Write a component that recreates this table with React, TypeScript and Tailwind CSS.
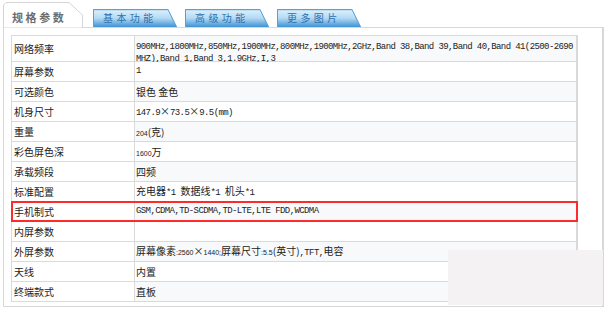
import React from "react";

const M = ({ children }: { children: React.ReactNode }) => (
  <span className="font-['Liberation_Mono',monospace] text-[9px] tracking-[-0.6px]">{children}</span>
);
const S = ({ children }: { children: React.ReactNode }) => (
  <span className="font-['Liberation_Sans',sans-serif] text-[7px]">{children}</span>
);

type Row = { label: string; value: React.ReactNode; highlight?: boolean };

const rows: Row[] = [
  { label: "屏幕参数", value: <M>1</M> },
  { label: "可选颜色", value: <span>银色 金色</span> },
  {
    label: "机身尺寸",
    value: (
      <span>
        <M>147.9</M>×<M>73.5</M>×<M>9.5(mm)</M>
      </span>
    ),
  },
  {
    label: "重量",
    value: (
      <span>
        <S>204</S>(克)
      </span>
    ),
  },
  {
    label: "彩色屏色深",
    value: (
      <span>
        <S>1600</S>万
      </span>
    ),
  },
  { label: "承载频段", value: <span>四频</span> },
  {
    label: "标准配置",
    value: (
      <span>
        充电器<M>*1 </M>数据线<M>*1 </M>机头<M>*1</M>
      </span>
    ),
  },
  {
    label: "手机制式",
    value: <M>GSM,CDMA,TD-SCDMA,TD-LTE,LTE FDD,WCDMA</M>,
    highlight: true,
  },
  { label: "内屏参数", value: <span></span> },
  {
    label: "外屏参数",
    value: (
      <span>
        屏幕像素<S>:2560</S>×<S>1440;</S>屏幕尺寸<S>:5.5</S>(英寸)<M>,TFT,</M>电容
      </span>
    ),
  },
  { label: "天线", value: <span>内置</span> },
  { label: "终端款式", value: <span>直板</span> },
];

const BlueTab = ({ label, id }: { label: string; id: string }) => (
  <div className="relative w-[84px] h-[18px] flex items-center pl-[10px]">
    <svg className="absolute inset-0" width="84" height="18" viewBox="0 0 84 18">
      <defs>
        <linearGradient id={id} x1="0" y1="0" x2="0" y2="1">
          <stop offset="0" stopColor="#7fbbe6" />
          <stop offset="0.12" stopColor="#d6ecfa" />
          <stop offset="0.5" stopColor="#b4dbf3" />
          <stop offset="1" stopColor="#3f92d5" />
        </linearGradient>
      </defs>
      <polygon points="0,0 75,0 84,18 0,18" fill={`url(#${id})`} />
      <polyline points="0.5,18 0.5,0.5 75,0.5 83.5,18" fill="none" stroke="#5a9fd6" strokeWidth="1" />
    </svg>
    <span className="relative text-[10px] leading-none tracking-[3.4px] text-[#2f6fb0]">{label}</span>
  </div>
);

export default function App() {
  return (
    <div className="relative w-[610px] h-[314px] bg-white overflow-hidden font-['Noto_Sans_CJK_SC',sans-serif] text-[10px] text-[#222]">
      {/* tabs */}
      <div className="flex items-end h-[27px] pl-[3px]">
        <div className="relative z-10 w-[80px] h-[26px] mb-[-1px] flex items-center pl-[9px] pt-[4px]">
          <svg className="absolute inset-0" width="80" height="26" viewBox="0 0 80 26">
            <polygon points="0.5,26 0.5,3 3,0.5 66,0.5 79.5,13 79.5,26" fill="#ffffff" stroke="#d4d4d4" strokeWidth="1" />
          </svg>
          <span className="relative font-bold text-[11px] leading-none tracking-[2.6px] text-[#6d6d6d]">规格参数</span>
        </div>
        <div className="w-[10px]" />
        <div className="flex gap-[8px]">
          <BlueTab label="基本功能" id="g1" />
          <BlueTab label="高级功能" id="g2" />
          <BlueTab label="更多图片" id="g3" />
        </div>
      </div>

      {/* panel */}
      <div className="ml-[3px] w-[601px] h-[280px] border border-[#d8d8d8] border-r-2 pt-[7px] pl-[7px]">
        <div className="w-[567px] border-t border-l border-r-2 border-[#dadada]">
          <div className="flex h-[26px] border-b border-[#dadada]">
            <div className="w-[123px] border-r border-[#dadada] flex items-center pl-[2px] bg-white">网络频率</div>
            <div className="flex-1 pl-[1px] pt-[4px] leading-[10px] bg-[#f8f9fb] whitespace-nowrap">
              <M>900MHz,1800MHz,850MHz,1900MHz,800MHz,1900MHz,2GHz,Band 38,Band 39,Band 40,Band 41(2500-2690</M>
              <br />
              <M>MHZ),Band 1,Band 3,1.9GHz,I,3</M>
            </div>
          </div>
          {rows.map((r, i) => (
            <div key={r.label} className="relative flex h-[20px] border-b border-[#dadada]">
              <div className="w-[123px] border-r border-[#dadada] flex items-center pl-[2px] bg-white whitespace-nowrap">
                {r.label}
              </div>
              <div
                className={
                  "flex-1 pl-[1px] flex items-center whitespace-nowrap " +
                  (i % 2 === 1 ? "bg-[#f8f9fb]" : "bg-white")
                }
              >
                {r.value}
              </div>
              {r.highlight && (
                <div className="absolute -top-[1px] -left-[1px] -right-[2px] -bottom-[1px] border-2 border-[#ff2b2b]" />
              )}
            </div>
          ))}
        </div>
      </div>

      {/* blurred patch */}
      <div className="absolute left-[448px] top-[250px] w-[155px] h-[55px] bg-[#f4f2f2]" />
    </div>
  );
}
